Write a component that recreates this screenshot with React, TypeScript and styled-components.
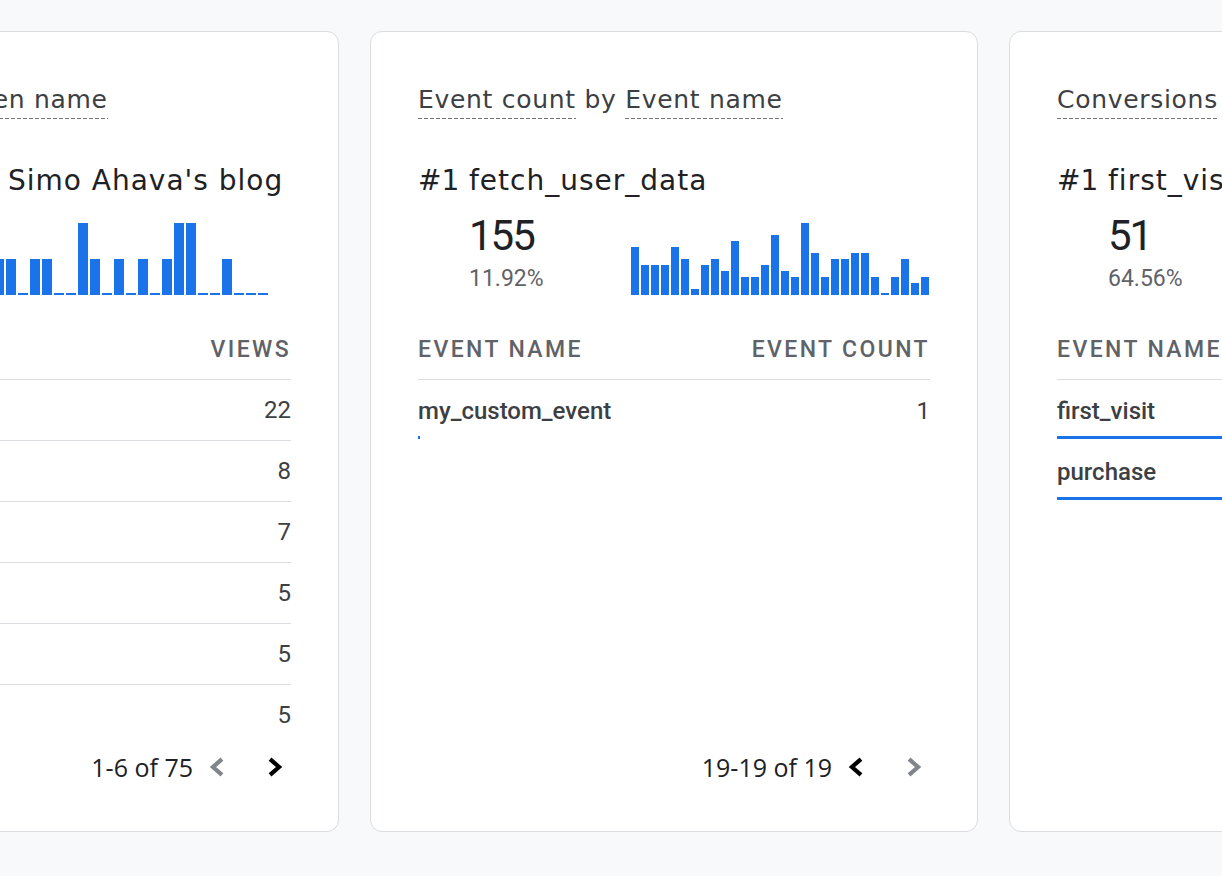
import styled, { createGlobalStyle } from "styled-components";

const GlobalStyle = createGlobalStyle`
  html, body {
    margin: 0;
    padding: 0;
    overflow: hidden;
    background: #f8f9fa;
  }
  body {
    font-family: Roboto, "Liberation Sans", sans-serif;
  }
`;

// the carousel is scrolled: the first card starts off screen
const CardRow = styled.main`
  display: flex;
  gap: 31px;
  padding-top: 31px;
  margin-left: -426px;
  height: 876px;
  box-sizing: border-box;
`;

const Card = styled.section<{ $width: number }>`
  flex: none;
  width: ${(p) => p.$width}px;
  height: 801px;
  box-sizing: border-box;
  background: #fff;
  border: 1px solid #dadce0;
  border-radius: 12px;
  padding: 52px 47px 46px;
  display: flex;
  flex-direction: column;
`;

const Title = styled.h2`
  margin: 0;
  font-family: "DejaVu Sans", sans-serif;
  font-weight: 400;
  font-size: 25px;
  letter-spacing: 0.7px;
  line-height: 32px;
  color: #3c4043;
  white-space: nowrap;
`;

const Dashed = styled.span`
  display: inline-block;
  padding-bottom: 3px;
  background-image: linear-gradient(to right, #757575 0 4px, transparent 4px 6px);
  background-size: 6px 1px;
  background-repeat: repeat-x;
  background-position: left bottom;
`;

const Headline = styled.div`
  display: flex;
  margin-top: 44px;
  font-family: "DejaVu Sans", sans-serif;
  font-size: 28px;
  letter-spacing: 1px;
  line-height: 36px;
  color: #202124;
  white-space: nowrap;
`;

const Rank = styled.span`
  flex: none;
  width: 51px;
  letter-spacing: 0;
`;

const StatRow = styled.div`
  display: flex;
  align-items: flex-end;
  justify-content: space-between;
  margin-top: 13px;
`;

const Stat = styled.div`
  padding-left: 51px;
  padding-bottom: 4px;
`;

const Value = styled.div`
  font-size: 42px;
  line-height: 48px;
  letter-spacing: -2px;
  color: #202124;
`;

const Percent = styled.div`
  margin-top: 7px;
  font-size: 23px;
  line-height: 24px;
  color: #5f6368;
`;

const Chart = styled.div<{ $inset: number }>`
  display: flex;
  align-items: flex-end;
  gap: 2px;
  height: 72px;
  margin-right: ${(p) => p.$inset}px;
`;

const Bar = styled.div<{ $w: number }>`
  flex: none;
  width: ${(p) => p.$w}px;
  background: #1a73e8;
`;

const TableHead = styled.div`
  display: flex;
  justify-content: space-between;
  margin-top: 43px;
  padding-bottom: 17px;
  border-bottom: 1px solid #dadce0;
  font-size: 23px;
  font-weight: 500;
  letter-spacing: 2.4px;
  line-height: 24px;
  color: #5f6368;
  text-transform: uppercase;
  white-space: nowrap;
`;

const LineRow = styled.div`
  display: flex;
  justify-content: space-between;
  align-items: center;
  height: 60px;
  font-size: 24px;
  color: #3c4043;
  white-space: nowrap;

  & + & {
    border-top: 1px solid #dadce0;
  }
`;

const Name = styled.span`
  font-weight: 500;
`;

const Count = styled.span`
  font-weight: 400;
`;

const BarRow = styled.div`
  padding: 17px 0 2px;
  font-size: 24px;
  line-height: 28px;
  color: #3c4043;
`;

const BarRowText = styled.div`
  display: flex;
  justify-content: space-between;
  white-space: nowrap;
`;

const Track = styled.div`
  margin-top: 11px;
  height: 3px;
`;

const Fill = styled.div`
  height: 100%;
  background: #1a73e8;
`;

const Pagination = styled.div`
  margin-top: auto;
  margin-right: -2px;
  display: flex;
  justify-content: flex-end;
  align-items: center;
  font-family: "Open Sans", sans-serif;
  font-size: 25px;
  line-height: 36px;
  color: #202124;
  white-space: nowrap;
`;

const PageLabel = styled.span`
  margin-right: 6px;
`;

const PageButton = styled.button<{ $off: boolean }>`
  width: 36px;
  height: 36px;
  padding: 0;
  border: 0;
  background: none;
  color: ${(p) => (p.$off ? "#80868b" : "#000")};
  cursor: ${(p) => (p.$off ? "default" : "pointer")};

  & + & {
    margin-left: 22px;
  }
  svg {
    display: block;
  }
`;

const ChevronLeft = () => (
  <svg width="36" height="36" viewBox="0 0 24 24" fill="none" stroke="currentColor" strokeWidth="2.8">
    <path d="M15.3 6.8 9.3 12l6 5.2" />
  </svg>
);

const ChevronRight = () => (
  <svg width="36" height="36" viewBox="0 0 24 24" fill="none" stroke="currentColor" strokeWidth="2.8">
    <path d="M8.7 6.8 14.7 12l-6 5.2" />
  </svg>
);

interface TitlePart {
  text: string;
  dashed?: boolean;
}

interface Row {
  name: string;
  count: number;
  share?: number;
}

interface CardData {
  width: number;
  title: TitlePart[];
  top: string;
  value: string;
  percent: string;
  bars: number[];
  barWidth: number;
  chartInset: number;
  columns: [string, string];
  rows: Row[];
  barRows?: boolean;
  page: string;
  prevOff: boolean;
  nextOff: boolean;
}

const cards: CardData[] = [
  {
    width: 765,
    title: [
      { text: "Views", dashed: true },
      { text: " by " },
      { text: "Page title and screen name", dashed: true },
    ],
    top: "Google Tag Manager | Simo Ahava's blog",
    value: "22",
    percent: "17.19%",
    bars: [1, 0, 1, 1, 0, 1, 1, 0, 0, 2, 1, 0, 1, 0, 1, 0, 1, 2, 2, 0, 0, 1, 0, 0, 0],
    barWidth: 10,
    chartInset: 23,
    columns: ["Page title", "Views"],
    rows: [
      { name: "Home", count: 22 },
      { name: "GTM tips", count: 8 },
      { name: "Articles", count: 7 },
      { name: "Search", count: 5 },
      { name: "About", count: 5 },
      { name: "Contact", count: 5 },
    ],
    page: "1-6 of 75",
    prevOff: true,
    nextOff: false,
  },
  {
    width: 608,
    title: [
      { text: "Event count", dashed: true },
      { text: " by " },
      { text: "Event name", dashed: true },
    ],
    top: "fetch_user_data",
    value: "155",
    percent: "11.92%",
    bars: [8, 5, 5, 5, 8, 6, 1, 5, 6, 4, 9, 3, 3, 5, 10, 4, 3, 12, 7, 3, 6, 6, 7, 7, 3, 0, 3, 6, 2, 3],
    barWidth: 8,
    chartInset: 1,
    columns: ["Event name", "Event count"],
    rows: [{ name: "my_custom_event", count: 1, share: 0.4 }],
    barRows: true,
    page: "19-19 of 19",
    prevOff: false,
    nextOff: true,
  },
  {
    width: 608,
    title: [
      { text: "Conversions", dashed: true },
      { text: " by " },
      { text: "Event name", dashed: true },
    ],
    top: "first_visit",
    value: "51",
    percent: "64.56%",
    bars: [2, 1, 1, 0, 2, 3, 1, 1, 0, 2, 1, 1, 3, 2, 0, 1, 1, 2, 4, 1, 0, 2, 1, 1, 3, 1, 0, 2, 1, 1],
    barWidth: 8,
    chartInset: 1,
    columns: ["Event name", "Conversions"],
    rows: [
      { name: "first_visit", count: 51, share: 100 },
      { name: "purchase", count: 28, share: 55 },
    ],
    barRows: true,
    page: "1-2 of 2",
    prevOff: true,
    nextOff: true,
  },
];

const ReportCard = ({ card }: { card: CardData }) => {
  const max = Math.max(...card.bars, 1);
  return (
    <Card $width={card.width}>
      <Title>
        {card.title.map((part, i) =>
          part.dashed ? <Dashed key={i}>{part.text}</Dashed> : <span key={i}>{part.text}</span>
        )}
      </Title>
      <Headline>
        <Rank>#1</Rank>
        <span>{card.top}</span>
      </Headline>
      <StatRow>
        <Stat>
          <Value>{card.value}</Value>
          <Percent>{card.percent}</Percent>
        </Stat>
        <Chart $inset={card.chartInset}>
          {card.bars.map((v, i) => (
            <Bar key={i} $w={card.barWidth} style={{ height: Math.max(2, (v / max) * 72) }} />
          ))}
        </Chart>
      </StatRow>
      <TableHead>
        <span>{card.columns[0]}</span>
        <span>{card.columns[1]}</span>
      </TableHead>
      {card.rows.map((row) =>
        card.barRows ? (
          <BarRow key={row.name}>
            <BarRowText>
              <Name>{row.name}</Name>
              <Count>{row.count}</Count>
            </BarRowText>
            <Track>
              <Fill style={{ width: `${row.share ?? 0}%` }} />
            </Track>
          </BarRow>
        ) : (
          <LineRow key={row.name}>
            <Name>{row.name}</Name>
            <Count>{row.count}</Count>
          </LineRow>
        )
      )}
      <Pagination>
        <PageLabel>{card.page}</PageLabel>
        <PageButton $off={card.prevOff} aria-label="Previous page">
          <ChevronLeft />
        </PageButton>
        <PageButton $off={card.nextOff} aria-label="Next page">
          <ChevronRight />
        </PageButton>
      </Pagination>
    </Card>
  );
};

export default function App() {
  return (
    <>
      <GlobalStyle />
      <CardRow>
        {cards.map((c) => (
          <ReportCard key={c.top} card={c} />
        ))}
      </CardRow>
    </>
  );
}
